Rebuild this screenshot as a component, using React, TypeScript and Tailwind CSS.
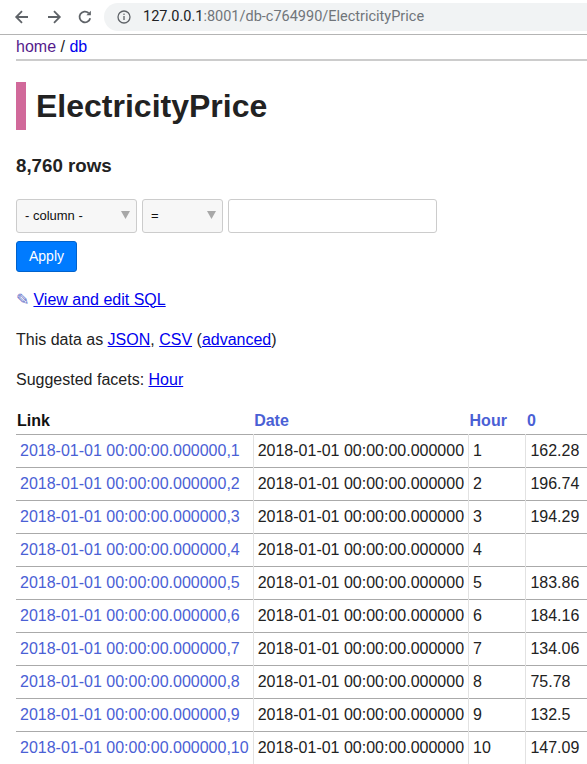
import React from "react";

const rows: { n: number; v: string }[] = [
  { n: 1, v: "162.28" },
  { n: 2, v: "196.74" },
  { n: 3, v: "194.29" },
  { n: 4, v: "" },
  { n: 5, v: "183.86" },
  { n: 6, v: "184.16" },
  { n: 7, v: "134.06" },
  { n: 8, v: "75.78" },
  { n: 9, v: "132.5" },
  { n: 10, v: "147.09" },
];

function Caret() {
  return (
    <svg className="absolute right-[6px] top-[11px]" width="9" height="8" viewBox="0 0 9 8">
      <path d="M0 0H9L4.5 8Z" fill="#a8a8a8" />
    </svg>
  );
}

function BrowserBar() {
  return (
    <div className="flex h-[35px] items-center border-b border-[#b4b4b4] bg-white">
      <div className="flex h-full w-[104px] shrink-0 items-center">
        <svg className="ml-[14px]" width="16" height="16" viewBox="0 0 16 16" fill="none" stroke="#5f6368" strokeWidth="1.8">
          <path d="M14 8H2.5M8 2.2L2.2 8L8 13.8" />
        </svg>
        <svg className="ml-[16px]" width="16" height="16" viewBox="0 0 16 16" fill="none" stroke="#5f6368" strokeWidth="1.8">
          <path d="M2 8h11.5M8 2.2L13.8 8L8 13.8" />
        </svg>
        <svg className="ml-[15px]" width="16" height="16" viewBox="0 0 16 16" fill="none" stroke="#5f6368" strokeWidth="1.8">
          <path d="M13.2 9.2A5.4 5.4 0 1 1 11.6 4" />
          <path d="M9.4 6.3 L13.9 6.3 L13.9 1.8 Z" fill="#5f6368" stroke="none" />
        </svg>
      </div>
      <div className="flex h-[28px] flex-1 items-center rounded-l-full bg-[#f1f3f4] pl-[13px]">
        <svg width="14" height="14" viewBox="0 0 14 14" fill="none">
          <circle cx="7" cy="7" r="6" stroke="#5f6368" strokeWidth="1.3" />
          <rect x="6.35" y="6" width="1.3" height="4" fill="#5f6368" />
          <rect x="6.35" y="3.6" width="1.3" height="1.3" fill="#5f6368" />
        </svg>
        <span className="ml-[12px] whitespace-nowrap text-[14.5px] font-['Roboto',sans-serif] leading-none">
          <span className="text-[#202124]">127.0.0.1</span>
          <span className="text-[#70757a]">:8001/db-c764990/ElectricityPrice</span>
        </span>
      </div>
    </div>
  );
}

export default function App() {
  return (
    <div className="w-[587px] overflow-hidden bg-white font-['Liberation_Sans',Arial,sans-serif] text-[16px] leading-[1.5] text-[#222]">
      <BrowserBar />
      <div className="ml-4 border-b-2 border-[#ccc]">
        <div className="h-6">
          <a className="text-[#551a8b]">home</a> / <a className="text-[#0000ee]">db</a>
        </div>
      </div>
      <div className="pl-4">
        <h1 className="mt-[21.44px] mb-[21.44px] border-l-[10px] border-[#d1699a] pl-[10px] text-[32px] font-bold leading-[48px] text-[#222]">
          ElectricityPrice
        </h1>
        <h3 className="mb-[18.72px] text-[18.72px] font-bold leading-[28px]">8,760 rows</h3>
        <div className="flex flex-col items-start gap-2">
          <div className="flex gap-[5px]">
            <div className="relative flex h-[34px] w-[121px] items-center rounded-[3px] border border-[#ccc] bg-[#f7f7f7] pl-[8px] text-[13px] text-[#111]">
              - column -
              <Caret />
            </div>
            <div className="relative flex h-[34px] w-[81px] items-center rounded-[3px] border border-[#ccc] bg-[#f7f7f7] pl-[8px] text-[13px] text-[#111]">
              =
              <Caret />
            </div>
            <div className="h-[34px] w-[209px] rounded-[3px] border border-[#ccc] bg-white" />
          </div>
          <button className="flex h-[31px] w-[61px] items-center justify-center rounded-[3px] border border-[#0062cc] bg-[#007bff] text-[14px] text-white">
            Apply
          </button>
        </div>
        <p className="mt-4">
          <span className="text-[#5f6fc8]">✎</span>{" "}
          <a className="text-[#0000ee] underline">View and edit SQL</a>
        </p>
        <p className="mt-4">
          This data as <a className="text-[#0000ee] underline">JSON</a>,{" "}
          <a className="text-[#0000ee] underline">CSV</a> (
          <a className="text-[#0000ee] underline">advanced</a>)
        </p>
        <p className="mt-4">
          Suggested facets: <a className="text-[#0000ee] underline">Hour</a>
        </p>
        <table className="mt-4 border-collapse">
          <thead>
            <tr>
              <th className="whitespace-nowrap py-px pl-px pr-[19px] text-left font-bold text-[#111]">Link</th>
              <th className="whitespace-nowrap py-px pl-px pr-[19px] text-left font-bold text-[#4a60d5]">Date</th>
              <th className="whitespace-nowrap py-px pl-px pr-[19px] text-left font-bold text-[#4a60d5]">Hour</th>
              <th className="whitespace-nowrap py-px pl-px pr-[19px] text-left font-bold text-[#4a60d5]">0</th>
            </tr>
          </thead>
          <tbody>
            {rows.map((r) => (
              <tr key={r.n}>
                <td className="whitespace-nowrap border-t border-r border-t-[#aaa] border-r-[#e2e2e2] p-1 text-[#4a60d5]">
                  2018-01-01 00:00:00.000000,{r.n}
                </td>
                <td className="whitespace-nowrap border-t border-r border-t-[#aaa] border-r-[#e2e2e2] p-1">
                  2018-01-01 00:00:00.000000
                </td>
                <td className="whitespace-nowrap border-t border-r border-t-[#aaa] border-r-[#e2e2e2] p-1">{r.n}</td>
                <td className="h-[33px] w-[62px] min-w-[62px] whitespace-nowrap border-t border-t-[#aaa] p-1">{r.v}</td>
              </tr>
            ))}
          </tbody>
        </table>
      </div>
    </div>
  );
}
